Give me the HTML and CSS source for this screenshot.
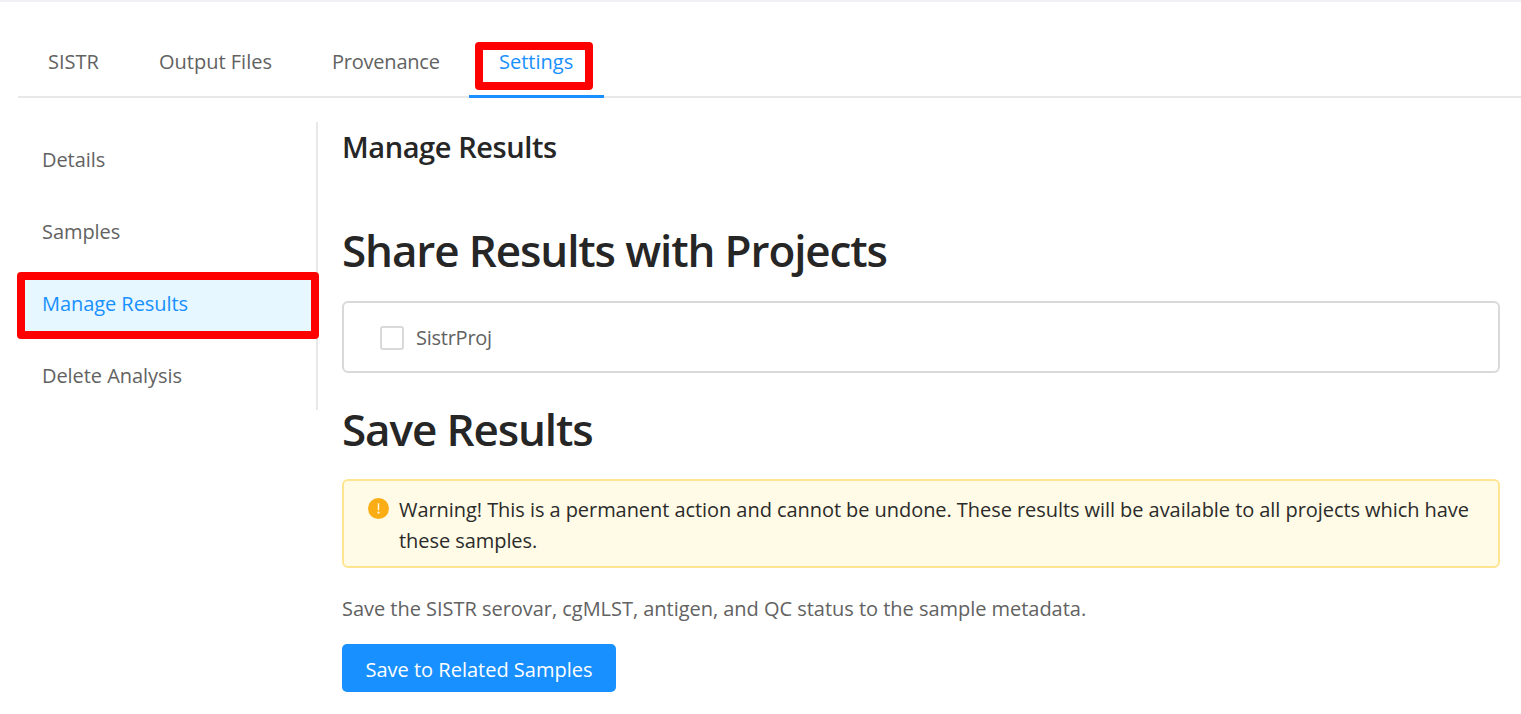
FILE: index.html
```html
<!DOCTYPE html>
<html lang="en">
<head>
<meta charset="utf-8">
<title>Manage Results</title>
<link rel="stylesheet" href="styles.css">
</head>
<body>
<div class="page">
  <nav class="tabs">
    <a class="tab tab-sistr"><span>SISTR</span></a>
    <a class="tab tab-output"><span>Output Files</span></a>
    <a class="tab tab-prov"><span>Provenance</span></a>
    <a class="tab tab-settings active"><span>Settings</span><i class="mark mark-tab"></i></a>
  </nav>
  <div class="body">
    <aside class="menu">
      <a class="item"><span>Details</span></a>
      <a class="item"><span>Samples</span></a>
      <a class="item selected"><span>Manage Results</span><i class="mark mark-item"></i></a>
      <a class="item"><span>Delete Analysis</span></a>
    </aside>
    <main class="content">
      <h2 class="title"><span>Manage Results</span></h2>
      <h1 class="heading share"><span>Share Results with Projects</span></h1>
      <label class="project"><span class="checkbox"></span><span class="project-name">SistrProj</span></label>
      <h1 class="heading save"><span>Save Results</span></h1>
      <div class="alert">
        <svg class="alert-icon" viewBox="0 0 21 21"><circle cx="10.5" cy="10.5" r="10.5" fill="#faad14"/><path d="M9.8 5.2h1.4v7H9.8z" fill="#fffbe6"/><circle cx="10.5" cy="14.7" r="1.1" fill="#fffbe6"/></svg>
        <p class="alert-text"><span>Warning! This is a permanent action and cannot be undone. These results will be available to all projects which have</span><br><span>these samples.</span></p>
      </div>
      <p class="hint"><span>Save the SISTR serovar, cgMLST, antigen, and QC status to the sample metadata.</span></p>
      <button class="button"><span>Save to Related Samples</span></button>
    </main>
  </div>
</div>
</body>
</html>
```
FILE: styles.css
```css
* { box-sizing: border-box; }
body { margin: 0; background: #fff; color: #626262; font: 400 20px/31px "Open Sans", "Noto Sans", sans-serif; overflow: hidden; }
h1, h2, p { margin: 0; }
span { white-space: nowrap; }
.page { height: 714px; border-top: 2px solid #f0f0f5; padding-left: 18px; }
.tabs { display: flex; height: 96px; border-bottom: 2px solid #e8e8e8; padding-top: 24px; }
.tab { position: relative; height: 72px; padding: 20px 30px 0; }
.tab-sistr { width: 111px; }
.tab-output { width: 173px; }
.tab-prov { width: 167px; letter-spacing: -0.22px; }
.tab-settings { width: 135px; }
.active { color: #1890ff; border-bottom: 3px solid #1890ff; }
.mark { position: absolute; border: 8px solid #f00; border-radius: 4px; }
.mark-tab { left: 6px; top: 16px; width: 118px; height: 48px; }
.mark-item { left: -1px; top: -3px; width: 302px; height: 67px; }
.body { display: flex; padding: 24px 21px 0 0; }
.menu { width: 300px; height: 288px; border-right: 2px solid #e8e8e8; padding-top: 9px; flex: none; letter-spacing: -0.06px; }
.item { display: block; position: relative; height: 60px; margin-bottom: 12px; padding: 13px 24px; }
.selected { background: #e6f7ff; color: #1890ff; }
.content { flex: 1; min-width: 0; padding-left: 24px; }
.title { font-size: 29px; line-height: 40px; font-weight: 600; letter-spacing: -0.42px; color: #262626; padding-top: 5px; }
.heading { font-size: 44px; line-height: 60px; font-weight: 600; letter-spacing: -1.11px; color: #262626; }
.share { margin-top: 53px; }
.project { display: flex; align-items: center; height: 72px; margin-top: 21px; border: 2px solid #d9d9d9; border-radius: 6px; padding-left: 36px; gap: 12px; }
.project-name { letter-spacing: -0.25px; }
.checkbox { width: 24px; height: 24px; border: 2px solid #d9d9d9; border-radius: 3px; margin-top: 2px; }
.save { margin-top: 26px; }
.alert { display: flex; height: 89px; margin-top: 20px; border: 2px solid #ffe58f; border-radius: 6px; background: #fffbe6; padding: 13px 24px; color: #2b2b2b; letter-spacing: -0.06px; }
.alert-icon { width: 21px; height: 21px; margin: 4px 10px 0 0; flex: none; }
.hint { margin-top: 25px; letter-spacing: -0.03px; }
.button { margin-top: 20px; width: 274px; height: 48px; border: 0; border-radius: 5px; background: #1890ff; color: #fff; font: inherit; padding: 2px 0 0; }
```
